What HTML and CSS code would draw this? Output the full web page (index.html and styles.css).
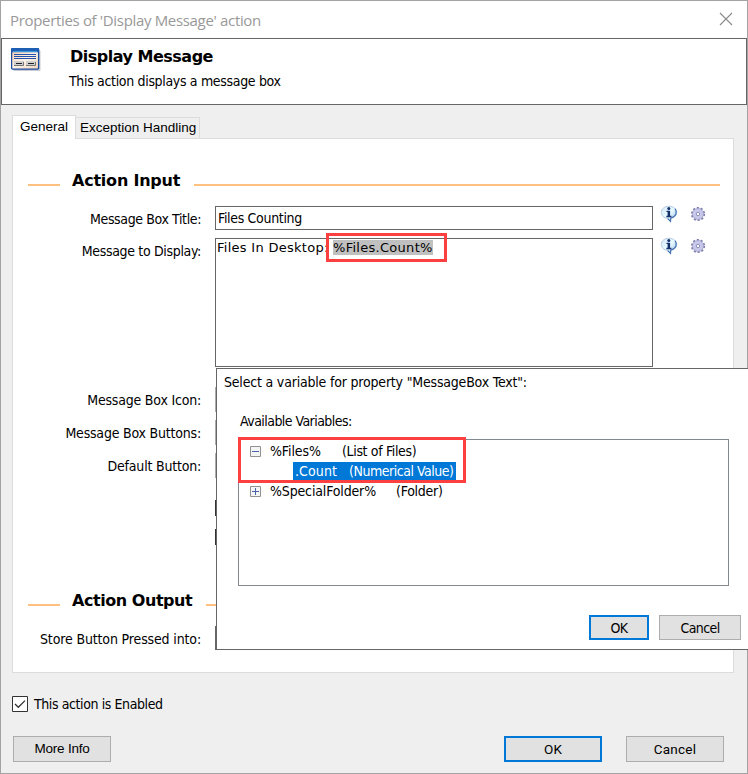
FILE: index.html
```html
<!DOCTYPE html>
<html lang="en">
<head>
<meta charset="utf-8">
<title>Properties of 'Display Message' action</title>
<link rel="stylesheet" href="styles.css">
</head>
<body>
<svg class="defs" width="0" height="0">
  <defs>
    <linearGradient id="bubble" x1="0" y1="0" x2="1" y2="1">
      <stop offset="0" stop-color="#d9e9f8"/><stop offset=".5" stop-color="#e6fbff"/><stop offset="1" stop-color="#9cc0e8"/>
    </linearGradient>
    <linearGradient id="form" x1="0" y1="0" x2="1" y2="1">
      <stop offset="0" stop-color="#fbc9a0"/><stop offset=".5" stop-color="#fdf3e8"/><stop offset="1" stop-color="#f3d5ba"/>
    </linearGradient>
  </defs>
  <symbol id="info" viewBox="0 0 18 18">
    <path d="M9 1.300C4.600 1.300 1.300 3.800 1.300 7.400c0 3.200 2.500 5.500 6.200 6l3 2.900.2-3c3.600-.6 5.800-2.900 5.800-5.900 0-3.600-3.100-6.100-7.500-6.100z" fill="url(#bubble)" stroke="#a9bfd8" stroke-width=".8"/>
    <path d="M15 3.600c2.600 3.300 1.400 8-4.300 9.600l-.2 3.200-2.800-2.800" fill="none" stroke="#4674b2" stroke-width="1.200"/>
    <circle cx="8.800" cy="3.400" r="1.500" fill="#14306c"/>
    <path d="M6.500 5.700h3.600v5.100h1.300v1.400H6.400v-1.400h1.200V7H6.500z" fill="#14306c"/>
  </symbol>
  <symbol id="gear" viewBox="0 0 16 16">
    <circle cx="8" cy="8" r="6.200" fill="none" stroke="#7c7cab" stroke-width="1.800" stroke-dasharray="2.100 1.796"/>
    <circle cx="8" cy="8" r="5.500" fill="#c8c8ea" stroke="#9494c2" stroke-width=".7"/>
    <circle cx="8" cy="8" r="1.700" fill="#fff" stroke="#8585b5" stroke-width=".9"/>
  </symbol>
</svg>
<main class="window">
  <header class="titlebar">
    <h1 class="caption">Properties of 'Display Message' action</h1>
    <svg class="close" width="14" height="14" viewBox="0 0 14 14"><path d="M1 1l12 12M13 1L1 13" stroke="#8a8a8a" stroke-width="1.1"/></svg>
  </header>
  <section class="banner">
    <svg class="logo" width="30" height="24" viewBox="0 0 30 24">
      <rect x="2" y="2" width="27.500" height="21" rx="1.500" fill="#c9ccd4"/>
      <rect x=".6" y=".6" width="27" height="20.500" rx="1" fill="url(#form)" stroke="#1c4b9f" stroke-width="1.300"/>
      <rect x=".4" y="0" width="27.500" height="4.300" rx="1" fill="#1e5fb4"/>
      <path d="M2 3.500h24" stroke="#3f9be0" stroke-width="1"/>
      <path d="M3 6.500h22M3 8.500h22M3 10.500h22" stroke="#2551ad" stroke-width="1"/>
      <path d="M3 13h10v5H3zM15 13h10v5H15z" fill="#cfcfcf"/>
      <path d="M3 17.500h9.500V14M15 17.500h9.500V14" stroke="#777" fill="none"/>
      <path d="M5 15.500h6M17 15.500h6" stroke="#222"/>
    </svg>
    <div class="banner-text">
      <h2 class="name">Display Message</h2>
      <p class="desc">This action displays a message box</p>
    </div>
  </section>
  <div class="body">
    <nav class="tabs">
      <span class="tab active"><span>General</span></span>
      <span class="tab"><span>Exception Handling</span></span>
    </nav>
    <section class="panel">
      <div class="heading"><i class="rule lead"></i><h3 class="heading-in">Action Input</h3><i class="rule"></i></div>
      <div class="row title-row">
        <label class="w-title">Message Box Title:</label>
        <div class="field"><span class="w-value">Files Counting</span></div>
        <svg class="info" width="18" height="18"><use href="#info"/></svg>
        <svg class="gear" width="16" height="16"><use href="#gear"/></svg>
      </div>
      <div class="row message-row">
        <label class="w-display">Message to Display:</label>
        <div class="field area"><span>Files In Desktop: </span><mark>%Files.Count%</mark></div>
        <svg class="info" width="18" height="18"><use href="#info"/></svg>
        <svg class="gear" width="16" height="16"><use href="#gear"/></svg>
      </div>
      <div class="row combo-row"><label>Message Box Icon:</label><div class="combo"></div></div>
      <div class="row combo-row"><label>Message Box Buttons:</label><div class="combo"></div></div>
      <div class="row combo-row"><label>Default Button:</label><div class="combo"></div></div>
      <div class="checks"><i class="box"></i><i class="box"></i></div>
      <div class="heading output"><i class="rule lead"></i><h3 class="heading-out">Action Output</h3><i class="rule"></i></div>
      <div class="row output-row"><label class="w-store">Store Button Pressed into:</label><div class="field"></div></div>
    </section>
  </div>
  <footer class="footer">
    <div class="enabled">
      <svg width="16" height="16" viewBox="0 0 16 16"><path d="M.5.500h15v15H.5z" fill="#fff" stroke="#333"/><path d="M3 8l3.300 3.300L13 4.600" fill="none" stroke="#333" stroke-width="1.300"/></svg>
      <span>This action is Enabled</span>
    </div>
    <div class="actions">
      <button class="btn arial">More Info</button>
      <button class="btn roboto primary">OK</button>
      <button class="btn roboto">Cancel</button>
    </div>
  </footer>
</main>
<aside class="picker">
  <p class="prompt">Select a variable for property "MessageBox Text":</p>
  <p class="available">Available Variables:</p>
  <div class="tree">
    <div class="node"><svg width="11" height="11" viewBox="0 0 11 11"><path d="M.5.500h10v10H.5z" fill="#f4f4f4" stroke="#919191"/><path d="M2 5.500h7" stroke="#4b63a7"/></svg><span class="n-files">%Files%</span><span class="t-files">(List of Files)</span></div>
    <div class="node child"><div class="selected"><span class="n-count">.Count</span><span class="t-count">(Numerical Value)</span></div></div>
    <div class="node"><svg width="11" height="11" viewBox="0 0 11 11"><path d="M.5.500h10v10H.5z" fill="#f4f4f4" stroke="#919191"/><path d="M2 5.500h7M5.500 2v7" stroke="#4b63a7"/></svg><span class="n-folder">%SpecialFolder%</span><span class="t-folder">(Folder)</span></div>
  </div>
  <div class="picker-actions">
    <button class="btn small primary">OK</button>
    <button class="btn small cancel">Cancel</button>
  </div>
</aside>
<div class="highlight text-mark"></div>
<div class="highlight tree-mark"></div>
</body>
</html>
```
FILE: styles.css
```css
* { box-sizing: border-box; margin: 0; padding: 0; }
body {
  width: 748px; height: 774px; overflow: hidden; position: relative;
  font: 14px/20px "DejaVu Sans Condensed", "DejaVu Sans", sans-serif;
  font-stretch: condensed; letter-spacing: -0.6px; color: #000; background: #efefef;
}
span, label, p, h1, h2, h3, mark, button { white-space: pre; }
.defs { position: absolute; }
.window { height: 774px; border: 1px solid #a3a3a3; display: flex; flex-direction: column; }
.titlebar { height: 37px; background: #fff; display: flex; justify-content: space-between; padding: 9px 14px 0 9px; }
.caption { font: 400 15px/20px "Open Sans", sans-serif; letter-spacing: -0.33px; color: #999; }
.close { margin-top: 2px; }
.banner { height: 67px; border: 1px solid #666; background: #fff; display: flex; padding: 9px 0 0 9px; }
.banner-text { margin-left: 28px; }
.name, .heading h3 { font: 700 16px/20px "DejaVu Sans", sans-serif; letter-spacing: -0.5px; }
.name { margin: -1px 0 0 1px; }
.desc { margin-top: 4px; letter-spacing: -0.33px; }
.body { padding: 10px 13px 0 11px; }
.tabs { height: 23px; display: flex; align-items: flex-end; font: 13.5px/18px "Liberation Sans", sans-serif; letter-spacing: 0; }
.tab { height: 21px; width: 124px; border: 1px solid #dcdcdc; border-left: 0; border-bottom: 0; padding: 1px 0 0 4px; }
.tab.active { height: 24px; width: 64px; border-left: 1px solid #dcdcdc; background: #fff; padding: 2px 0 0 7px; margin-bottom: -1px; position: relative; }
.panel { height: 535px; border: 1px solid #dcdcdc; background: #fff; padding: 32px 13px 0 15px; }
.heading { display: flex; height: 20px; align-items: center; }
.heading h3 { padding-left: 12px; flex: none; }
.heading h3.heading-in { width: 134px; letter-spacing: -0.22px; }
.heading h3.heading-out { width: 146px; letter-spacing: -0.45px; }
.rule { height: 2px; flex: 1; background: #ffc080; margin-top: 7px; }
.rule.lead { flex: none; width: 32px; }
.row { display: flex; }
.row label { width: 173px; text-align: right; margin-right: 14px; padding-top: 3px; flex: none; letter-spacing: -0.2px; }
.row .w-title { letter-spacing: -0.38px; }
.row .w-display { letter-spacing: -0.33px; }
.row .w-store { letter-spacing: -0.14px; }
.field { width: 438px; height: 24px; border: 1px solid #666; padding: 1px 2px; flex: none; }
.w-value { letter-spacing: -0.32px; }
.title-row { margin-top: 15px; height: 32px; }
.message-row { height: 149px; }
.area { height: 129px; font-family: "DejaVu Sans", sans-serif; font-stretch: normal; font-size: 13px; line-height: 17px; letter-spacing: .28px; padding: 0 1px; }
mark { background: #c0c0c0; color: #000; }
.info { margin: -1px 0 0 7px; flex: none; }
.gear { margin: 0 0 0 12px; flex: none; }
.combo { width: 438px; height: 25px; border: 1px solid #adadad; }
.combo-row { height: 33px; }
.checks { margin: 14px 0 0 187px; height: 45px; display: grid; gap: 13px; grid-auto-rows: 16px; }
.box { width: 16px; border: 1px solid #333; }
.output { margin-top: 46px; }
.output-row { margin-top: 15px; }
.footer { padding: 23px 23px 0 11px; }
.enabled { display: flex; align-items: center; height: 16px; gap: 6px; letter-spacing: -0.4px; }
.actions { display: flex; margin-top: 24px; padding-left: 1px; }
.btn { width: 98px; height: 26px; border: 1px solid #adadad; background: #e1e1e1; color: #000; font: inherit; letter-spacing: inherit; line-height: 22px; flex: none; }
.btn.primary { border: 2px solid #0078d7; }
.arial { font-family: "Liberation Sans", sans-serif; font-size: 13.5px; letter-spacing: -0.2px; }
.roboto { font-family: Roboto, sans-serif; font-stretch: normal; font-size: 13.5px; letter-spacing: .2px; }
.actions .primary { margin: 0 24px 0 auto; }
.picker { position: absolute; left: 216px; top: 368px; width: 540px; height: 282px; background: #fff; border: 1px solid #666; padding: 3px 0 0 7px; }
.prompt { letter-spacing: -0.19px; }
.available { margin: 19px 0 0 16px; letter-spacing: -0.55px; }
.tree { width: 491px; height: 147px; margin: 8px 0 0 14px; border: 1px solid #828790; padding: 1px 0 0 11px; }
.node { height: 20px; display: flex; align-items: center; }
.node svg { margin: 0 9px 0 0; flex: none; }
.n-files { width: 72px; letter-spacing: -0.1px; }
.t-files { letter-spacing: -0.35px; }
.n-folder { width: 126px; letter-spacing: -0.15px; }
.t-folder { letter-spacing: -0.25px; }
.child { padding-left: 43px; }
.selected { background: #0078d7; color: #fff; width: 163px; height: 19px; line-height: 19px; display: flex; padding-left: 2px; }
.n-count { width: 54px; letter-spacing: .1px; }
.t-count { letter-spacing: -0.47px; }
.picker-actions { display: flex; gap: 10px; margin: 29px 0 0 365px; }
.small { height: 25px; width: 60px; }
.small.cancel { width: 82px; }
.highlight { position: absolute; border: 3px solid #fc4040; }
.text-mark { left: 326px; top: 233px; width: 121px; height: 29px; }
.tree-mark { left: 238px; top: 437px; width: 228px; height: 46px; }
```
